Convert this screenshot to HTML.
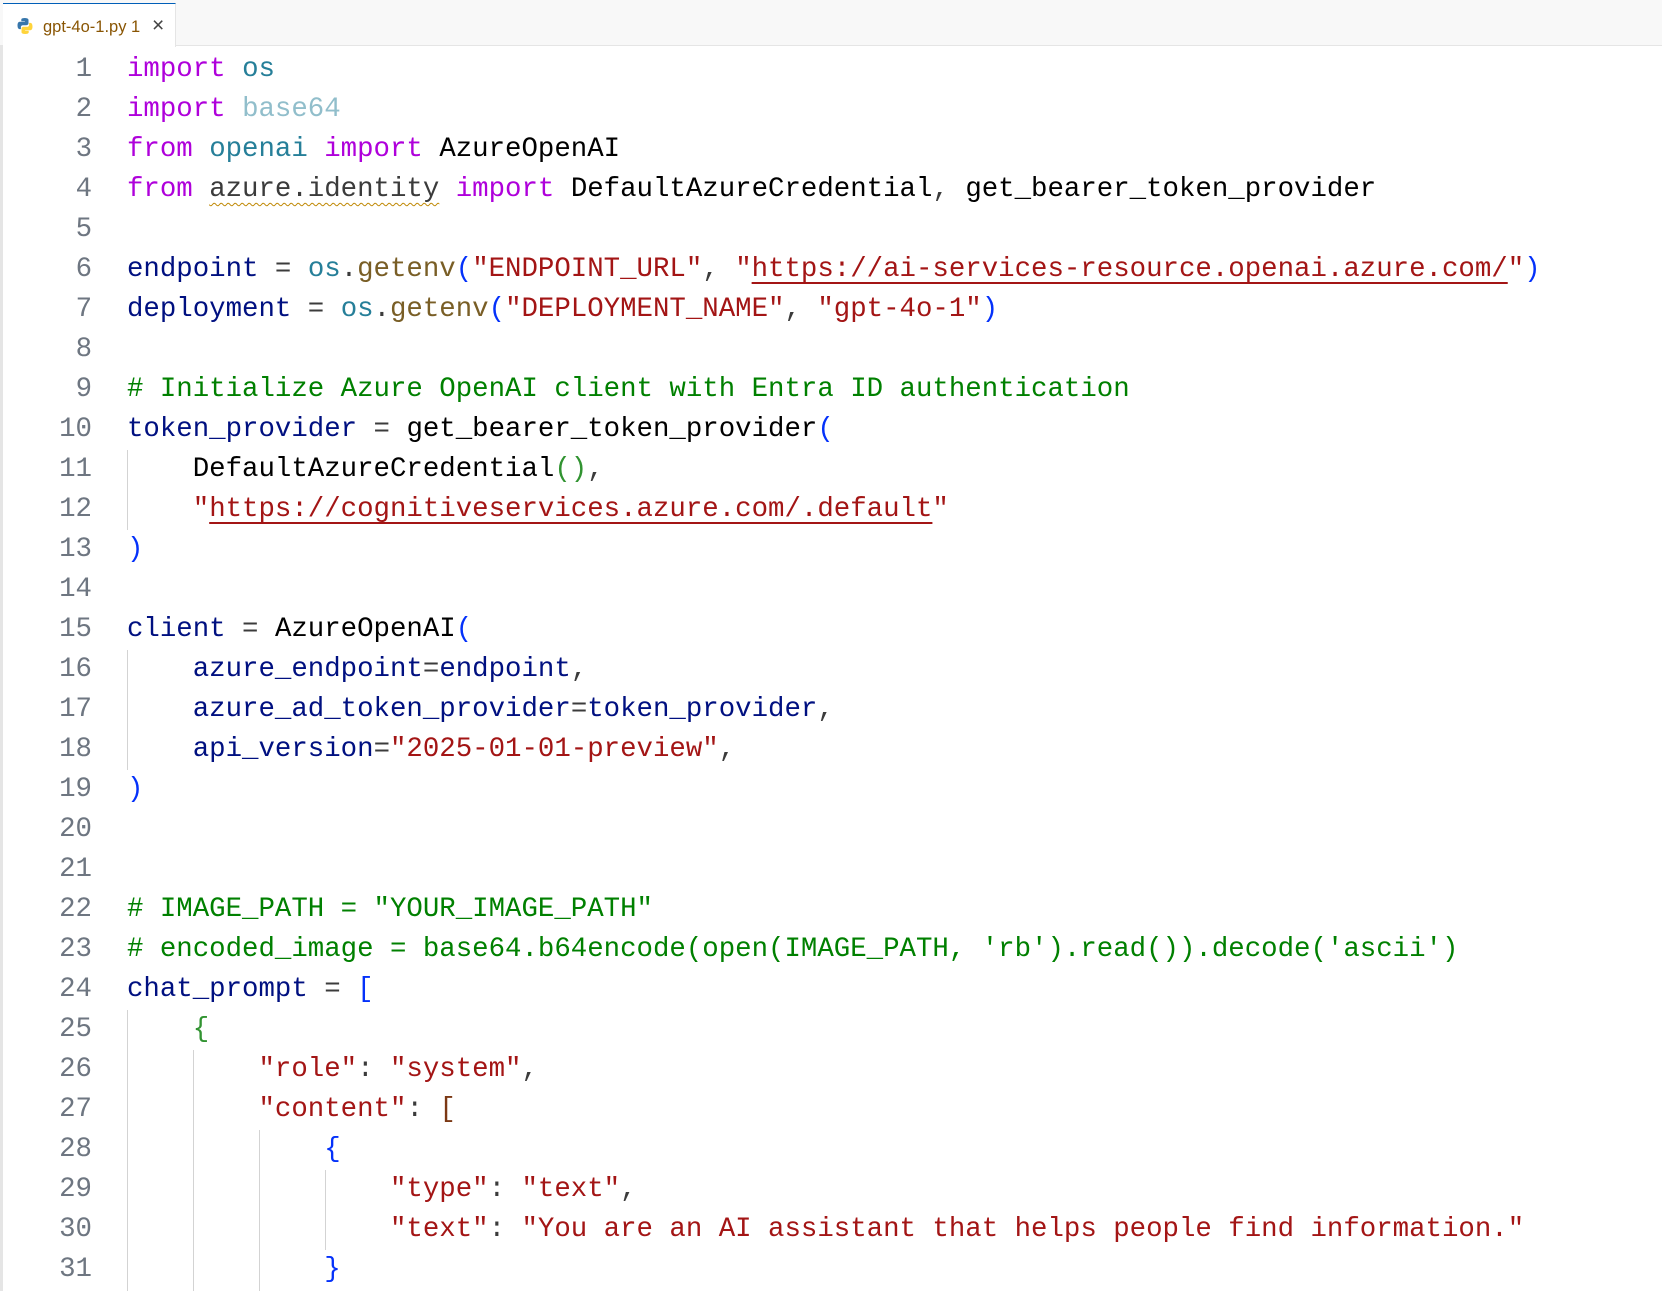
<!DOCTYPE html>
<html><head><meta charset="utf-8"><style>
body{margin:0;width:1662px;height:1289px;background:#fff;overflow:hidden;position:relative;font-family:"Liberation Mono",monospace}
.bar{position:absolute;left:0;top:0;width:1662px;height:46px;background:#f8f8f8;border-bottom:1px solid #e5e5e5;box-sizing:border-box}
.tab{position:absolute;left:3px;top:3px;width:173px;height:44px;background:#fff;border-top:1px solid #005fb8;border-right:1px solid #e5e5e5;box-sizing:border-box;font-family:"Liberation Sans",sans-serif;font-size:16.5px;color:#895503}
.tab .t{position:absolute;left:40px;top:14px}
.tab .x{position:absolute;left:149px;top:10px;color:#444;font-size:21px}
.lb{position:absolute;left:0;top:46px;width:3px;height:1245px;background:#e5e5e5}
.ln{position:absolute;left:0;width:92px;text-align:right;color:#6e7681;font-size:27.4px;line-height:40px;white-space:pre}
.cl{position:absolute;left:127px;font-size:27.4px;line-height:40px;white-space:pre;color:#3b3b3b}
.g{position:absolute;width:1px;background:#d3d3d3}
.k{color:#af00db}.m{color:#267f99}.v{color:#001080}.f{color:#795e26}.s{color:#a31515}.c{color:#008000}.b1{color:#0431fa}.b2{color:#319331}.b3{color:#7b3814}.d{color:#000}
.u{text-decoration:underline;text-decoration-color:#a31515;text-underline-offset:6px;text-decoration-thickness:2px}
.sq{text-decoration:underline wavy #bf8803;text-underline-offset:6px;text-decoration-thickness:1px}
</style></head><body>
<div class="bar"><div class="tab">
<svg style="position:absolute;left:13px;top:13px" width="18" height="18" viewBox="0 0 18 18"><path d="M8.8 1C5 1 5.3 2.6 5.3 2.6v1.7h3.6v.5H3.9S1.5 4.5 1.5 8.4s2.1 3.7 2.1 3.7h1.3v-1.8s-.1-2.1 2-2.1h3.6s2 0 2-1.9V3S12.8 1 8.8 1z" fill="#3776ab"/><path d="M9.2 17c3.8 0 3.5-1.6 3.5-1.6v-1.7H9.1v-.5h5s2.4.3 2.4-3.6-2.1-3.7-2.1-3.7h-1.3v1.8s.1 2.1-2 2.1H7.5s-2 0-2 1.9V15s-.3 2 3.7 2z" fill="#ffd43b"/></svg>
<span class="t">gpt-4o-1.py 1</span><span class="x">×</span></div></div>
<div class="lb"></div>
<div class="g" style="left:127px;top:450px;height:80px"></div>
<div class="g" style="left:127px;top:650px;height:120px"></div>
<div class="g" style="left:127px;top:1010px;height:281px"></div>
<div class="g" style="left:193px;top:1050px;height:241px"></div>
<div class="g" style="left:259px;top:1130px;height:161px"></div>
<div class="g" style="left:325px;top:1170px;height:80px"></div>
<div class="ln" style="top:50px">1
2
3
4
5
6
7
8
9
10
11
12
13
14
15
16
17
18
19
20
21
22
23
24
25
26
27
28
29
30
31</div>
<div class="cl" style="top:50px"><span class="k">import</span> <span class="m">os</span>
<span class="k">import</span> <span class="m" style="opacity:.5">base64</span>
<span class="k">from</span> <span class="m">openai</span> <span class="k">import</span> <span class="d">AzureOpenAI</span>
<span class="k">from</span> <span class="sq">azure.identity</span> <span class="k">import</span> <span class="d">DefaultAzureCredential</span>, <span class="d">get_bearer_token_provider</span>

<span class="v">endpoint</span> = <span class="m">os</span>.<span class="f">getenv</span><span class="b1">(</span><span class="s">"ENDPOINT_URL"</span>, <span class="s">"<span class="u">https://ai-services-resource.openai.azure.com/</span>"</span><span class="b1">)</span>
<span class="v">deployment</span> = <span class="m">os</span>.<span class="f">getenv</span><span class="b1">(</span><span class="s">"DEPLOYMENT_NAME"</span>, <span class="s">"gpt-4o-1"</span><span class="b1">)</span>

<span class="c"># Initialize Azure OpenAI client with Entra ID authentication</span>
<span class="v">token_provider</span> = <span class="d">get_bearer_token_provider</span><span class="b1">(</span>
    <span class="d">DefaultAzureCredential</span><span class="b2">()</span>,
    <span class="s">"<span class="u">https://cognitiveservices.azure.com/.default</span>"</span>
<span class="b1">)</span>

<span class="v">client</span> = <span class="d">AzureOpenAI</span><span class="b1">(</span>
    <span class="v">azure_endpoint</span>=<span class="v">endpoint</span>,
    <span class="v">azure_ad_token_provider</span>=<span class="v">token_provider</span>,
    <span class="v">api_version</span>=<span class="s">"2025-01-01-preview"</span>,
<span class="b1">)</span>


<span class="c"># IMAGE_PATH = "YOUR_IMAGE_PATH"</span>
<span class="c"># encoded_image = base64.b64encode(open(IMAGE_PATH, 'rb').read()).decode('ascii')</span>
<span class="v">chat_prompt</span> = <span class="b1">[</span>
    <span class="b2">{</span>
        <span class="s">"role"</span>: <span class="s">"system"</span>,
        <span class="s">"content"</span>: <span class="b3">[</span>
            <span class="b1">{</span>
                <span class="s">"type"</span>: <span class="s">"text"</span>,
                <span class="s">"text"</span>: <span class="s">"You are an AI assistant that helps people find information."</span>
            <span class="b1">}</span></div>
</body></html>
